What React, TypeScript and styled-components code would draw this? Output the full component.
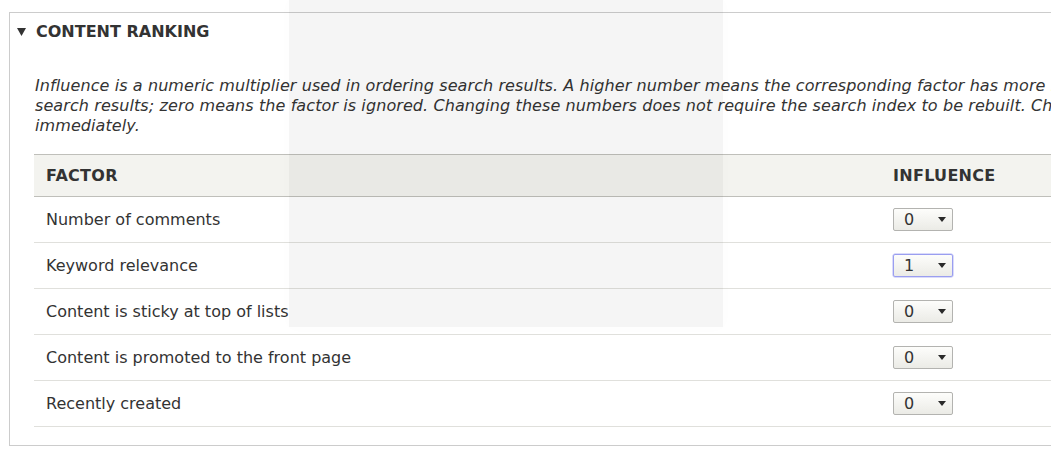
import styled, { createGlobalStyle } from "styled-components";

interface Factor {
	id: string;
	label: string;
	value: number;
	focused?: boolean;
}

const factors: Factor[] = [
	{ id: "comments", label: "Number of comments", value: 0 },
	{ id: "relevance", label: "Keyword relevance", value: 1, focused: true },
	{ id: "sticky", label: "Content is sticky at top of lists", value: 0 },
	{ id: "promote", label: "Content is promoted to the front page", value: 0 },
	{ id: "recent", label: "Recently created", value: 0 },
];

const GlobalStyles = createGlobalStyle`
	html, body {
		margin: 0;
		padding: 0;
		background: #fff;
		overflow: hidden;
	}
	body {
		font-family: "DejaVu Sans", Verdana, sans-serif;
		color: #333;
		font-size: 16px;
	}
`;

const Page = styled.div`
	position: relative;
	padding: 12px 0 0 9px;
	width: 1300px;
`;

const Fieldset = styled.section`
	width: 1208px;
	border: 1px solid #ccc;
	padding: 0 0 18px 0;
	box-sizing: border-box;
`;

const Summary = styled.div`
	display: flex;
	align-items: center;
	gap: 10px;
	padding: 10px 7px;
	line-height: 18px;
	font-size: 16px;
	font-weight: bold;
	text-transform: uppercase;
	color: #333;
`;

const Body = styled.div`
	padding: 0 14px 0 24px;
`;

const Description = styled.p`
	margin: 25px 0 18px 1px;
	font-style: italic;
	line-height: 20px;
	font-size: 16px;
	letter-spacing: 0.09px;
	color: #333;
`;

const Table = styled.table`
	width: 100%;
	border-collapse: collapse;
	border-top: 1px solid #bfbfba;
`;

const HeadCell = styled.th<{ $width?: number }>`
	text-align: left;
	background: #f3f3ef;
	padding: 0 12px;
	height: 42px;
	font-size: 16px;
	font-weight: bold;
	text-transform: uppercase;
	letter-spacing: 0.3px;
	border-bottom: 1px solid #bfbfba;
	box-sizing: border-box;
	width: ${(p) => (p.$width ? `${p.$width}px` : "auto")};
`;

const Row = styled.tr`
	border-bottom: 1px solid #e0e0dc;
`;

const Cell = styled.td`
	padding: 0 12px;
	height: 45px;
	font-size: 16px;
	color: #333;
`;

const SelectBox = styled.div<{ $focused?: boolean }>`
	display: flex;
	align-items: center;
	justify-content: space-between;
	width: 60px;
	height: 23px;
	box-sizing: border-box;
	padding: 0 6px 0 10px;
	border: 1px solid ${(p) => (p.$focused ? "#9a9ef0" : "#b3b3b0")};
	box-shadow: ${(p) => (p.$focused ? "0 0 0 0.5px #b5b8f5" : "none")};
	border-radius: 2px;
	background: linear-gradient(#fdfdfb, #ebebe6);
	font-size: 16px;
	color: #333;
`;

const Overlay = styled.div`
	position: absolute;
	left: 289px;
	top: 0;
	width: 434px;
	height: 327px;
	background: rgba(0, 0, 0, 0.04);
	box-shadow: 0 0 14px rgba(0, 0, 0, 0.015);
	pointer-events: none;
`;

function Disclosure() {
	return (
		<svg width="9" height="8" viewBox="0 0 9 8">
			<path d="M0 0 L9 0 L4.5 8 Z" fill="#333" />
		</svg>
	);
}

function Caret() {
	return (
		<svg width="8" height="5" viewBox="0 0 8 5">
			<path d="M0 0 L8 0 L4 5 Z" fill="#2a2a2a" />
		</svg>
	);
}

function App() {
	return (
		<>
			<GlobalStyles />
			<Page>
				<Fieldset>
					<Summary>
						<Disclosure />
						Content ranking
					</Summary>
					<Body>
						<Description>
							Influence is a numeric multiplier used in ordering search results. A
							higher number means the corresponding factor has more influence on
							search results; zero means the factor is ignored. Changing these
							numbers does not require the search index to be rebuilt. Changes take
							effect immediately.
						</Description>
						<Table>
							<thead>
								<tr>
									<HeadCell $width={847}>Factor</HeadCell>
									<HeadCell>Influence</HeadCell>
								</tr>
							</thead>
							<tbody>
								{factors.map((f) => (
									<Row key={f.id}>
										<Cell>{f.label}</Cell>
										<Cell>
											<SelectBox $focused={f.focused}>
												{f.value}
												<Caret />
											</SelectBox>
										</Cell>
									</Row>
								))}
							</tbody>
						</Table>
					</Body>
				</Fieldset>
				<Overlay />
			</Page>
		</>
	);
}

export default App;
